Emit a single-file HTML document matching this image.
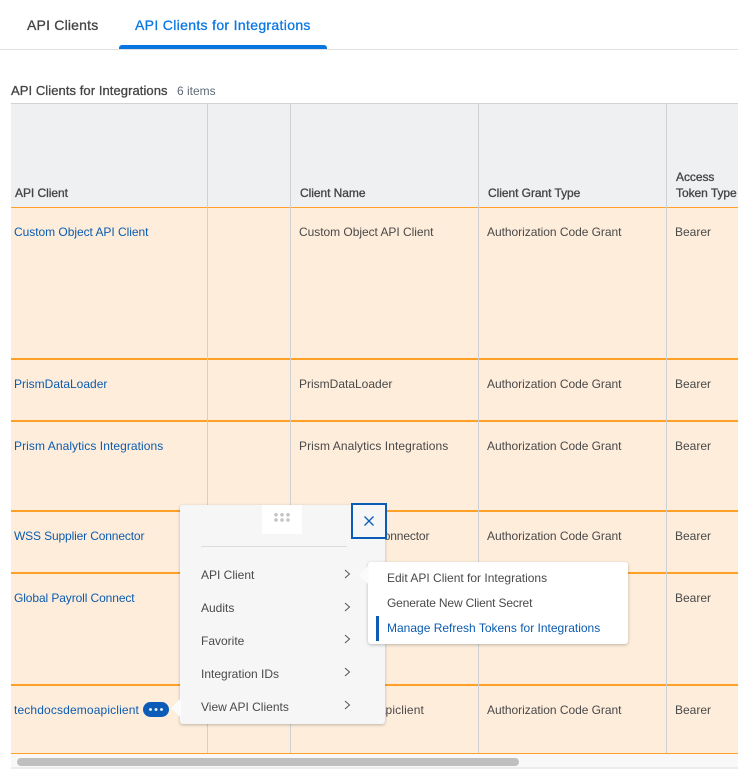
<!DOCTYPE html>
<html><head><meta charset="utf-8">
<style>
html,body{margin:0;padding:0;background:#fff;width:738px;height:773px;overflow:hidden}
body{position:relative;font-family:"Liberation Sans",sans-serif;font-size:12px;color:#494949}
.a{position:absolute}
.t{position:absolute;white-space:nowrap;line-height:16px;height:16px}
.l{color:#0b5cb0}
.g{letter-spacing:-.04px}
.h{font-size:12px;color:#444;-webkit-text-stroke:.3px #444;letter-spacing:-.05px}
.v{position:absolute;width:1px;background:#cfd0d3;top:104px;height:649px}
.o{position:absolute;left:11px;width:727px;background:#ffa126}
svg{position:absolute;overflow:visible}
</style></head><body>
<div class="a" style="left:0;top:49px;width:738px;height:1px;background:#e0e0e0"></div>
<div class="t" style="left:27px;top:17px;font-size:14px;letter-spacing:.2px;color:#444;-webkit-text-stroke:.3px #444">API Clients</div>
<div class="t" style="left:135px;top:17px;font-size:14px;letter-spacing:.33px;color:#0b78e3;-webkit-text-stroke:.3px #0b78e3">API Clients for Integrations</div>
<div class="a" style="left:119px;top:45px;width:208px;height:4px;background:#0875e1;border-radius:3px 3px 0 0"></div>

<div class="t" style="left:11px;top:83px;font-size:13px;letter-spacing:.07px;color:#444;-webkit-text-stroke:.3px #444">API Clients for Integrations</div>
<div class="t" style="left:177px;top:83px;font-size:12px;color:#5e6a75">6 items</div>

<div class="a" style="left:11px;top:103px;width:727px;height:1px;background:#d2d2d2"></div>
<div class="a" style="left:11px;top:104px;width:727px;height:103px;background:#eff0f2"></div>
<div class="a" style="left:11px;top:208px;width:727px;height:545px;background:#feeddb"></div>

<div class="o" style="top:207px;height:1px"></div>
<div class="o" style="top:358px;height:2px"></div>
<div class="o" style="top:420px;height:2px"></div>
<div class="o" style="top:510px;height:2px"></div>
<div class="o" style="top:572px;height:2px"></div>
<div class="o" style="top:684px;height:2px"></div>
<div class="o" style="top:753px;height:1px"></div>

<div class="v" style="left:207px"></div>
<div class="v" style="left:290px"></div>
<div class="v" style="left:478px"></div>
<div class="v" style="left:666px"></div>

<div class="t h" style="left:15px;top:185px">API Client</div>
<div class="t h" style="left:300px;top:185px">Client Name</div>
<div class="t h" style="left:488px;top:185px">Client Grant Type</div>
<div class="t h" style="left:676px;top:169px">Access</div>
<div class="t h" style="left:676px;top:185px">Token Type</div>

<div class="t l g" style="left:14px;top:224px">Custom Object API Client</div>
<div class="t g" style="left:299px;top:224px">Custom Object API Client</div>
<div class="t g" style="left:487px;top:224px">Authorization Code Grant</div>
<div class="t" style="left:675px;top:224px">Bearer</div>

<div class="t l" style="left:14px;top:376px">PrismDataLoader</div>
<div class="t" style="left:299px;top:376px">PrismDataLoader</div>
<div class="t g" style="left:487px;top:376px">Authorization Code Grant</div>
<div class="t" style="left:675px;top:376px">Bearer</div>

<div class="t l" style="left:14px;top:438px;letter-spacing:.07px">Prism Analytics Integrations</div>
<div class="t" style="left:299px;top:438px;letter-spacing:.07px">Prism Analytics Integrations</div>
<div class="t g" style="left:487px;top:438px">Authorization Code Grant</div>
<div class="t" style="left:675px;top:438px">Bearer</div>

<div class="t l" style="left:14px;top:528px;letter-spacing:-.14px">WSS Supplier Connector</div>
<div class="t" style="left:299px;top:528px;letter-spacing:-.14px">WSS Supplier Connector</div>
<div class="t g" style="left:487px;top:528px">Authorization Code Grant</div>
<div class="t" style="left:675px;top:528px">Bearer</div>

<div class="t l" style="left:14px;top:590px;letter-spacing:-.1px">Global Payroll Connect</div>
<div class="t g" style="left:487px;top:590px">Authorization Code Grant</div>
<div class="t" style="left:675px;top:590px">Bearer</div>

<div class="t l" style="left:14px;top:702px;letter-spacing:.14px">techdocsdemoapiclient</div>
<div class="t" style="left:299px;top:702px;letter-spacing:.14px">techdocsdemoapiclient</div>
<div class="t g" style="left:487px;top:702px">Authorization Code Grant</div>
<div class="t" style="left:675px;top:702px">Bearer</div>

<div class="a" style="left:143px;top:702px;width:26px;height:15px;border-radius:8px;background:#0b5cb8"></div>
<svg style="left:143px;top:702px" width="26" height="15"><circle cx="7.5" cy="7.5" r="1.4" fill="#fff"/><circle cx="13" cy="7.5" r="1.4" fill="#fff"/><circle cx="18.5" cy="7.5" r="1.4" fill="#fff"/></svg>

<div class="a" style="left:11px;top:754px;width:727px;height:15px;background:#f8f8f8;border-bottom:2px solid #ececec;box-sizing:border-box"></div>
<div class="a" style="left:17px;top:758px;width:502px;height:8px;border-radius:4px;background:#bfbfbf"></div>

<!-- main menu -->
<div class="a" style="left:180px;top:505px;width:205px;height:219px;background:#f6f6f6;border-radius:3px;box-shadow:0 1px 3px rgba(0,0,0,.25)"></div>
<svg style="left:170px;top:698px" width="11" height="21"><path d="M11 0 L1 10 L11 20 Z" fill="#fbfbfb"/></svg>
<div class="a" style="left:262px;top:505px;width:40px;height:29px;background:#fff"></div>
<svg style="left:274px;top:513px" width="16" height="10" fill="#c4c4c4"><circle cx="2" cy="1.8" r="1.8"/><circle cx="8" cy="1.8" r="1.8"/><circle cx="14" cy="1.8" r="1.8"/><circle cx="2" cy="7" r="1.8"/><circle cx="8" cy="7" r="1.8"/><circle cx="14" cy="7" r="1.8"/></svg>
<div class="a" style="left:351px;top:503px;width:36px;height:36px;box-sizing:border-box;border:2px solid #0b5cb8;background:#f6f6f6"></div>
<svg style="left:364px;top:516px" width="10" height="10"><path d="M.5 .5 L9.5 9.5 M9.5 .5 L.5 9.5" stroke="#0b5cb8" stroke-width="1.3" fill="none"/></svg>
<div class="a" style="left:201px;top:546px;width:146px;height:1px;background:#dcdcdc"></div>

<div class="t" style="left:201px;top:567px">API Client</div>
<div class="t" style="left:201px;top:600px">Audits</div>
<div class="t" style="left:201px;top:633px">Favorite</div>
<div class="t" style="left:201px;top:666px">Integration IDs</div>
<div class="t" style="left:201px;top:699px">View API Clients</div>

<svg style="left:344px;top:569px" width="7" height="10"><path d="M1 1 L5.5 5 L1 9" stroke="#555" stroke-width="1" fill="none"/></svg>
<svg style="left:344px;top:602px" width="7" height="10"><path d="M1 1 L5.5 5 L1 9" stroke="#555" stroke-width="1" fill="none"/></svg>
<svg style="left:344px;top:634px" width="7" height="10"><path d="M1 1 L5.5 5 L1 9" stroke="#555" stroke-width="1" fill="none"/></svg>
<svg style="left:344px;top:667px" width="7" height="10"><path d="M1 1 L5.5 5 L1 9" stroke="#555" stroke-width="1" fill="none"/></svg>
<svg style="left:344px;top:700px" width="7" height="10"><path d="M1 1 L5.5 5 L1 9" stroke="#555" stroke-width="1" fill="none"/></svg>

<!-- submenu -->
<div class="a" style="left:368px;top:562px;width:260px;height:82px;background:#fff;border-radius:3px;box-shadow:0 1px 3px rgba(0,0,0,.25)"></div>
<svg style="left:358px;top:565px" width="11" height="20"><path d="M11 0 L1 10 L11 20 Z" fill="#fbfbfb"/></svg>
<div class="t" style="left:387px;top:570px">Edit API Client for Integrations</div>
<div class="t" style="left:387px;top:595px;letter-spacing:-.16px">Generate New Client Secret</div>
<div class="a" style="left:376px;top:616px;width:3px;height:25px;background:#0b5cb8"></div>
<div class="t l" style="left:387px;top:620px">Manage Refresh Tokens for Integrations</div>
</body></html>
